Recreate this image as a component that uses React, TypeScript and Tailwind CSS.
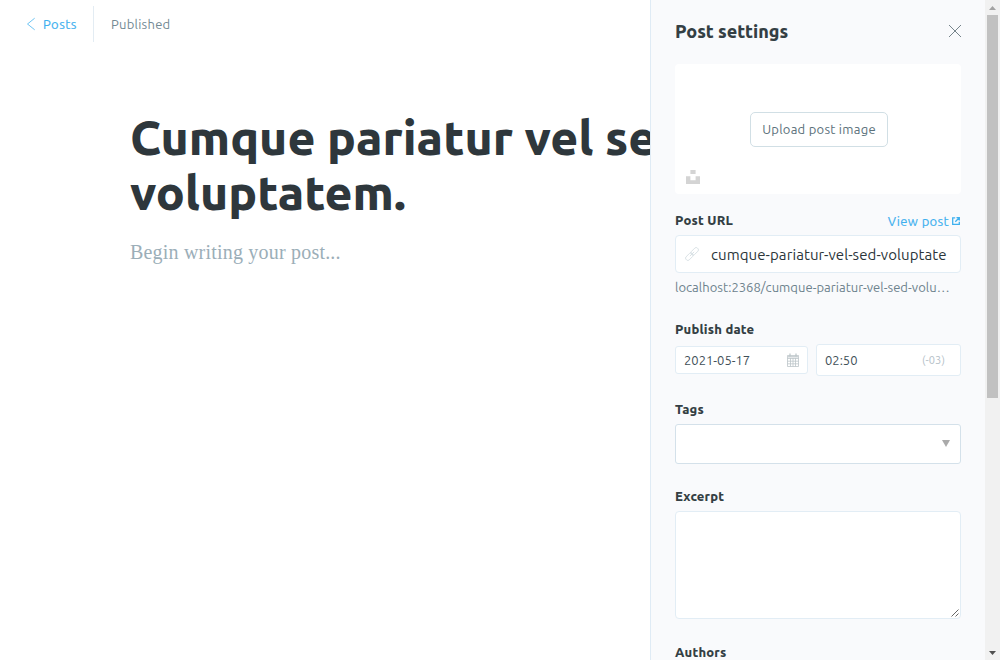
import React from "react";

function BackIcon() {
  return (
    <svg className="h-3 w-2 shrink-0" viewBox="0 0 8 12" fill="none" stroke="#3eb0ef" strokeWidth="0.75" overflow="visible">
      <path d="M7.700 0.200 0.500 6l7.200 5.800" />
    </svg>
  );
}

function CloseIcon() {
  return (
    <svg className="-mt-0.5 h-3 w-3" viewBox="0 0 12 12" fill="none" stroke="#54666d" strokeWidth="0.8" overflow="visible">
      <path d="M0 0 12 12M12 0 0 12" />
    </svg>
  );
}

function ExternalIcon() {
  return (
    <svg className="-mt-px mr-px h-2 w-2" viewBox="0 0 8 8" fill="none" stroke="#3eb0ef" strokeWidth="1.300">
      <path d="M3.200 0.900H0.700V7.300H7.300V4.800M4.500 0.700H7.300V3.500M7.200 0.800 3.300 4.700" />
    </svg>
  );
}

function LinkIcon() {
  return (
    <svg className="h-3.5 w-3.5 shrink-0" viewBox="0 0 14 14" fill="none" stroke="#d3dde2" strokeWidth="0.8">
      <g transform="rotate(-45 7 7)">
        <rect x="-1" y="4.800" width="8.500" height="4.400" rx="1.800" />
        <rect x="6.500" y="4.800" width="8.500" height="4.400" rx="1.800" />
        <path d="M4 7h6" />
      </g>
    </svg>
  );
}

function CalendarIcon() {
  return (
    <svg className="h-3.5 w-3 shrink-0" viewBox="0 0 12 14" fill="none" stroke="#bcc5c9" strokeWidth="0.8">
      <path d="M0.500 2.500h11v11H0.500zM0.500 5.500h11M0.500 8.200h11M0.500 10.800h11M3.500 5v8.500M6 5v8.500M8.500 5v8.500" />
      <path d="M0.500 3.500h11" strokeWidth="2" stroke="#cdd3d6" />
      <path d="M3 0.500v3M9 0.500v3" strokeWidth="1.200" />
    </svg>
  );
}

function Label({ children }: { children: React.ReactNode }) {
  return <h2 className="text-[13px] leading-4 font-extrabold tracking-[0.200px] text-[#343f44]">{children}</h2>;
}

function Editor() {
  return (
    <main className="min-w-0 flex-1 overflow-hidden bg-white">
      <header className="flex h-12 items-center pl-[27px] text-[13px] tracking-[0.250px] whitespace-nowrap">
        <a className="flex items-center gap-2 text-[#3eb0ef]">
          <BackIcon />
          <span className="w-[34px] pt-0.5 tracking-[0.450px] [-webkit-text-stroke:0.150px]">Posts</span>
        </a>
        <div className="ml-4 h-9 w-px bg-[#e3ecf3]" />
        <span className="ml-[17px] pt-0.5 text-[#738a94]">Published</span>
      </header>
      <div className="w-[740px] pt-[62px] pl-[130px]">
        <h1 className="text-[48px] leading-[55px] font-extrabold whitespace-nowrap text-[#2e373c]">
          <span className="block">Cumque pariatur vel sed</span>
          <span className="block">voluptatem.</span>
        </h1>
        <p className="mt-[16px] font-['Liberation_Serif',serif] text-[20px] leading-8 tracking-[0.200px] text-[#9baeb8]">
          Begin writing your post...
        </p>
      </div>
    </main>
  );
}

function Settings() {
  return (
    <aside className="h-full w-[335px] shrink-0 overflow-hidden border-l border-[#dfebf5] bg-[#f9fafc] pr-6 pl-6 whitespace-nowrap">
      <div className="flex h-16 items-center justify-between">
        <h1 className="-mt-0.5 text-[18px] leading-6 font-extrabold tracking-[-0.050px] text-[#343f44]">Post settings</h1>
        <CloseIcon />
      </div>

      <section className="relative flex h-[130px] items-center justify-center rounded bg-white">
        <button className="ml-0.5 h-[35px] w-[138px] rounded-[5px] border border-[#d1dfe5] pt-px text-[13px] tracking-[0.250px] text-[#5b717b]">
          Upload post image
        </button>
        <svg className="absolute bottom-2.5 left-[11px] h-3.5 w-3.5" viewBox="0 0 14 14" fill="#d4d4d4">
          <path d="M4.400 0h5.200v4H4.400zM0 6.200h4.400v4h5.200v-4H14V14H0z" />
        </svg>
      </section>

      <section className="mt-[18px]">
        <div className="flex h-[17px] items-start justify-between">
          <Label>Post URL</Label>
          <a className="mt-px flex items-center gap-[3px] text-[13px] leading-4 tracking-[0.350px] text-[#3eb0ef] [-webkit-text-stroke:0.150px]">
            View post
            <ExternalIcon />
          </a>
        </div>
        <div className="mt-[6px] flex h-[38px] items-center gap-[12px] rounded border border-[#e2edf5] bg-white pr-[13px] pl-[9px]">
          <LinkIcon />
          <span className="overflow-hidden pt-0.5 text-[15px] tracking-[0.080px] text-[#2b353a]">cumque-pariatur-vel-sed-voluptate</span>
        </div>
        <p className="mt-[6px] text-[13px] leading-4 tracking-[0.030px] text-[#6d828d]">localhost:2368/cumque-pariatur-vel-sed-volu…</p>
      </section>

      <section className="mt-[26px]">
        <Label>Publish date</Label>
        <div className="mt-[7px] flex h-8 items-center gap-2">
          <div className="flex h-7 w-[133px] items-center justify-between rounded-[3px] border border-[#e2edf5] bg-white pr-2 pl-2 text-[13px] text-[#3f5058]">
            <span className="pt-0.5">2021-05-17</span>
            <CalendarIcon />
          </div>
          <div className="flex h-8 w-[145px] items-center justify-between rounded-[3px] border border-[#e2edf5] bg-white pr-[15px] pl-2 text-[13px] text-[#3f5058]">
            <span className="pt-0.5">02:50</span>
            <span className="text-[11px] tracking-[0.100px] text-[#b4c0c8]">(-03)</span>
          </div>
        </div>
      </section>

      <section className="mt-[25px]">
        <Label>Tags</Label>
        <div className="mt-[7px] flex h-10 items-center justify-end rounded-[3px] border border-[#d4e1ea] bg-white pr-2.5">
          <svg className="-mt-px h-[7px] w-2" viewBox="0 0 8 7" fill="#aaa">
            <path d="M0 0h8L4 7z" />
          </svg>
        </div>
      </section>

      <section className="mt-6">
        <Label>Excerpt</Label>
        <div className="mt-[7px] flex h-[108px] items-end justify-end rounded border border-[#e2edf5] bg-white pr-px pb-px">
          <svg className="h-2 w-2" viewBox="0 0 8 8" stroke="#555" strokeWidth="0.9">
            <path d="M0.500 7.500l7-7M4.500 7.500l3-3" />
          </svg>
        </div>
      </section>

      <section className="mt-[25px]">
        <Label>Authors</Label>
      </section>
    </aside>
  );
}

function Scrollbar() {
  return (
    <div className="flex h-full w-[15px] shrink-0 flex-col items-center bg-[#f1f1f1]">
      <div className="flex h-[15px] items-center justify-center">
        <svg className="h-1 w-[7px]" viewBox="0 0 7 4" fill="#a3a3a3">
          <path d="M0 4h7L3.500 0z" />
        </svg>
      </div>
      <div className="h-[383px] w-[11px] bg-[#c1c1c1]" />
      <div className="mt-auto flex h-[15px] items-center justify-center">
        <svg className="h-1 w-[7px]" viewBox="0 0 7 4" fill="#505050">
          <path d="M0 0h7L3.500 4z" />
        </svg>
      </div>
    </div>
  );
}

export default function App() {
  return (
    <div className="flex h-[660px] w-[1000px] overflow-hidden bg-white font-['Ubuntu','Noto_Sans',sans-serif]">
      <Editor />
      <Settings />
      <Scrollbar />
    </div>
  );
}
